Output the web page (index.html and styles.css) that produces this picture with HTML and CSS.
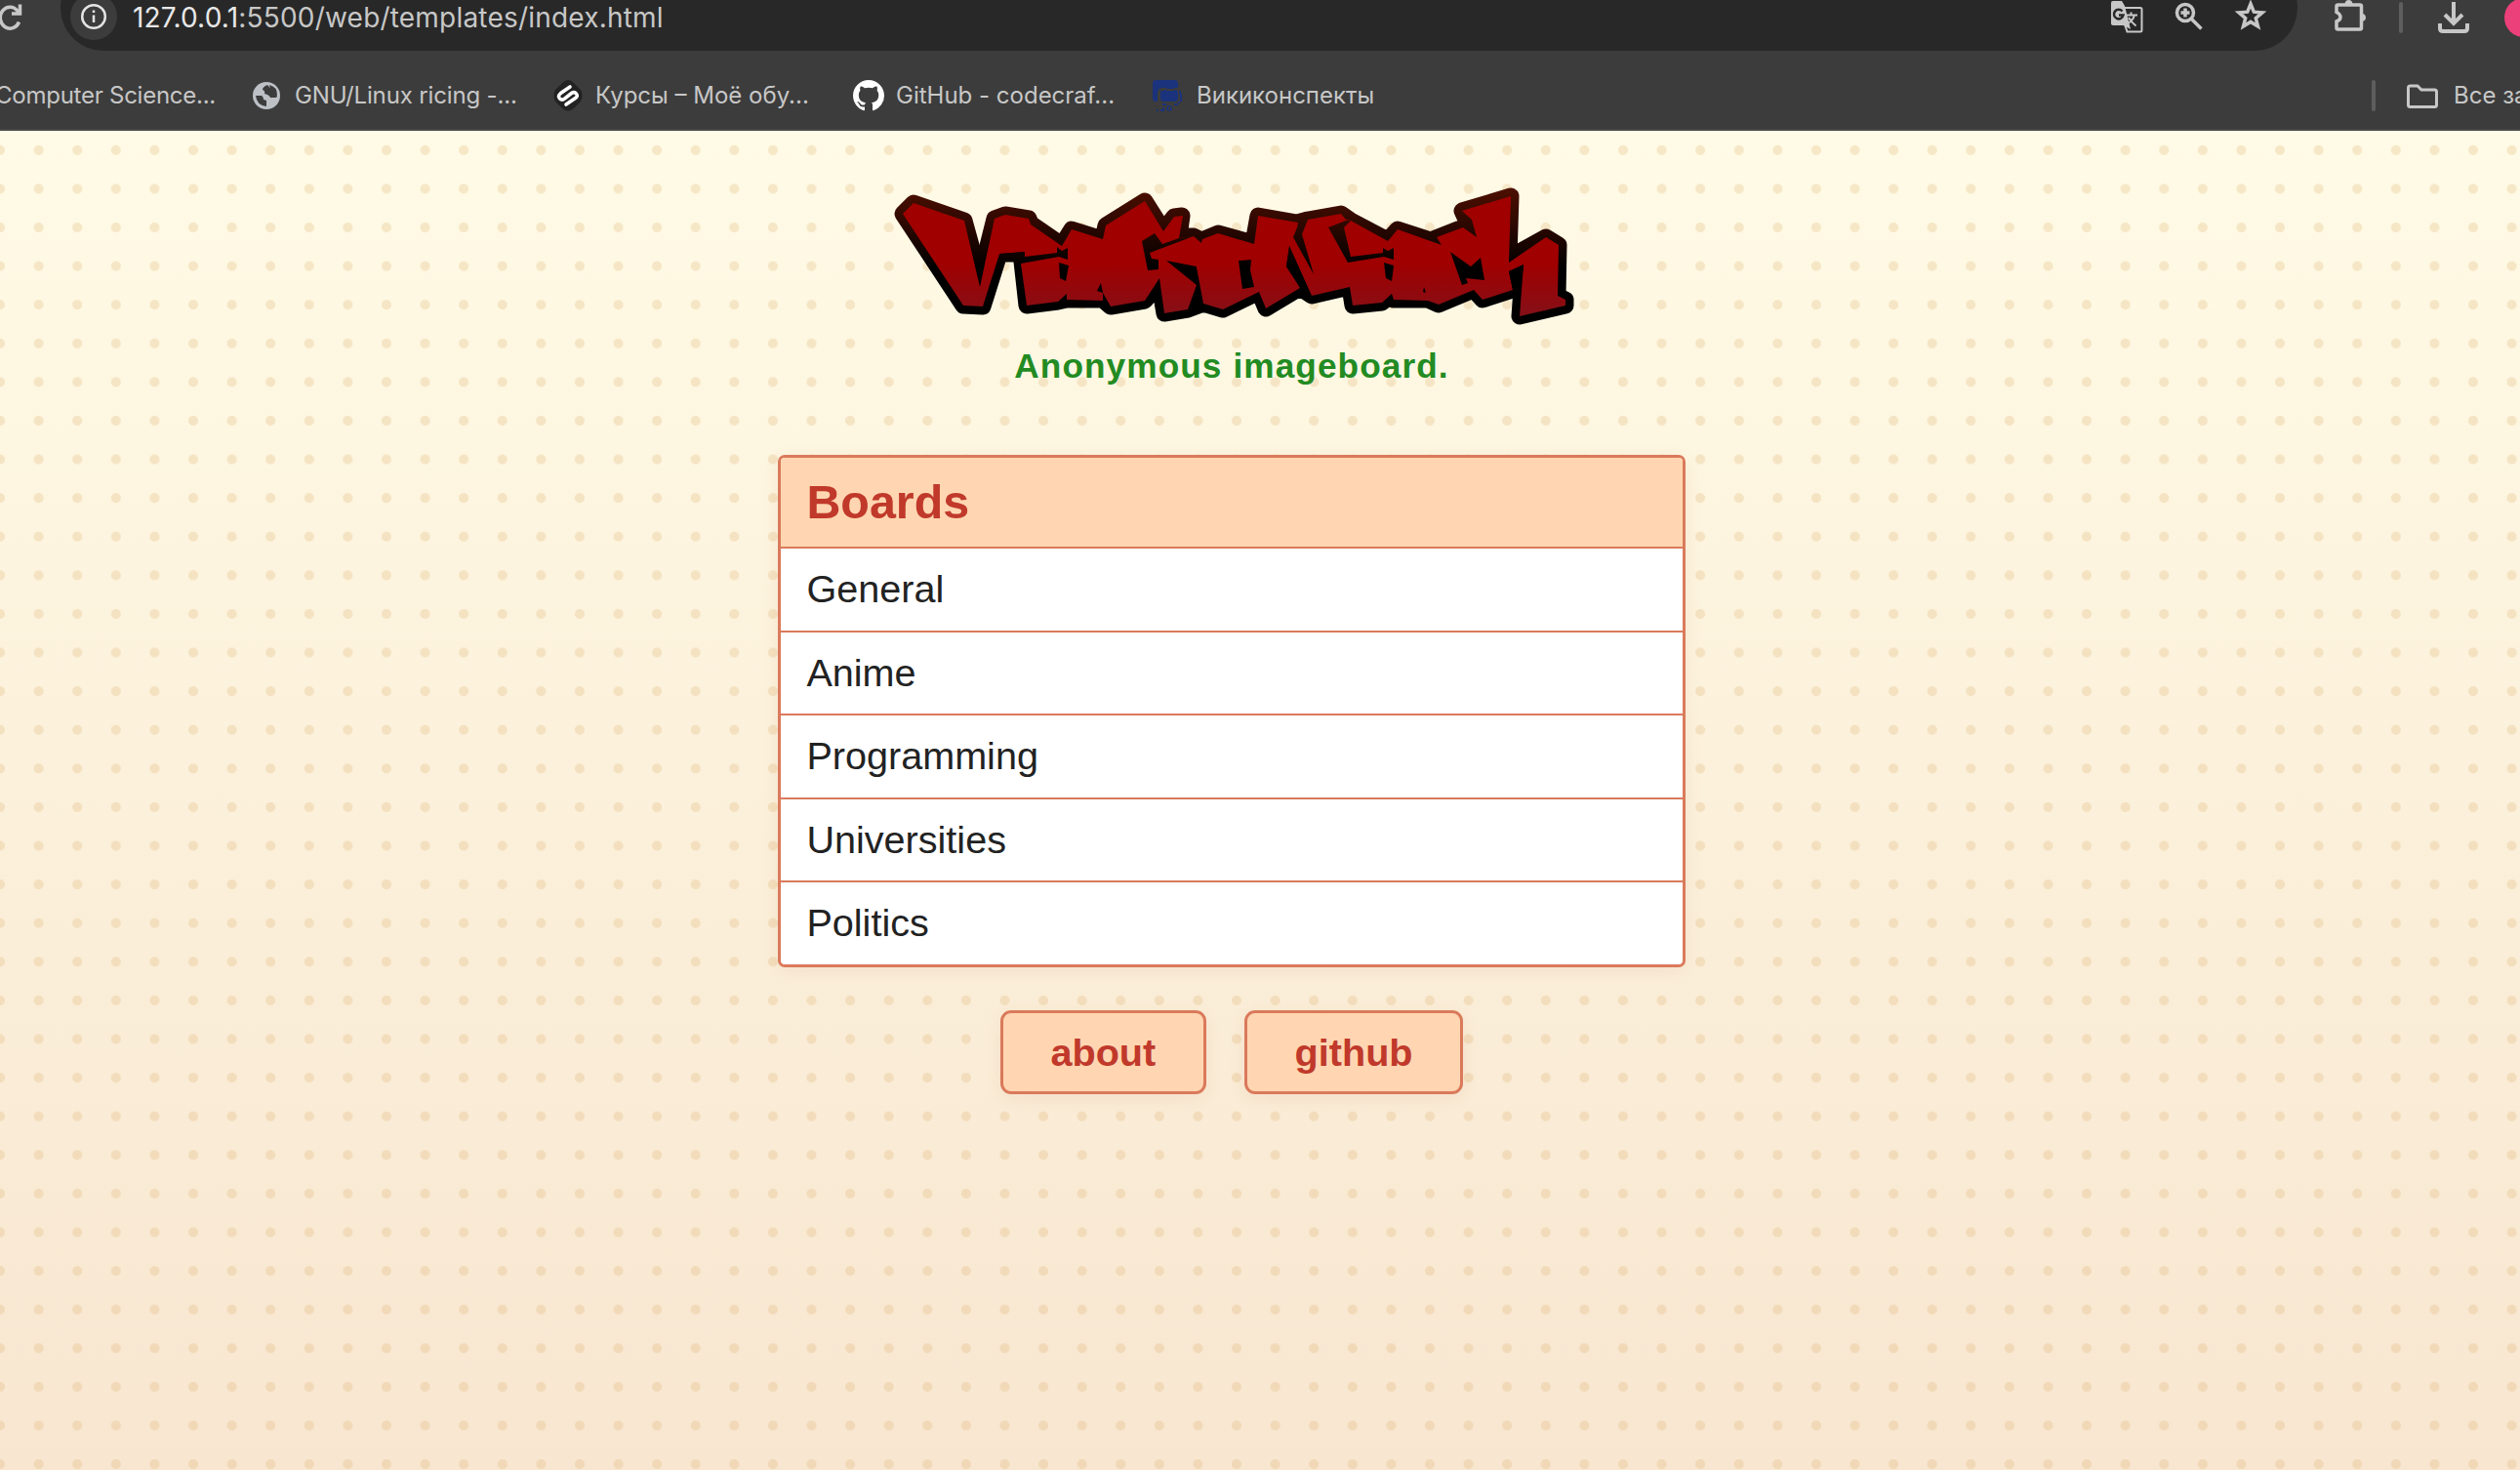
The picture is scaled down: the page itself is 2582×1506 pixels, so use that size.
FILE: index.html
```html
<!DOCTYPE html>
<html lang="ru">
<head>
<meta charset="utf-8">
<title>Anonymous imageboard</title>
<link rel="stylesheet" href="styles.css">
</head>
<body>
<header class="chrome">
  <div class="toolbar">
    <svg class="reload" viewBox="0 0 32 32"><path d="M25.500 20.500A10 11 0 1 1 24 9.200L26 11M26.500 2.500V12H18"/></svg>
    <div class="omnibox">
      <span class="info"><svg viewBox="0 0 28 28"><circle cx="14" cy="14" r="11.800"/><path d="M14 12.500V20M14 7.500V10"/></svg></span>
      <span class="url"><b>127.0.0.1</b>:5500/web/templates/index.html</span>
      <div class="omni-icons">
        <svg class="translate" viewBox="0 0 34 34"><path class="solid" d="M3 1H12L15 6L21 30L14 26H3Q1 26 1 24V3Q1 1 3 1Z"/><path class="frame" d="M15 8H31Q32.500 8 32.500 9.500V31Q32.500 32.500 31 32.500H17.500L14 22"/><path class="g" d="M12.500 11.500A4.800 4.800 0 1 0 13.500 15.500H9"/><path class="frame" d="M16 15.500H28M21.500 12.500V15.500M25 15.500Q23.500 21 17.500 24.500M19 18Q22 23 26.500 26.500"/></svg>
        <svg class="lens" viewBox="0 0 30 30"><circle cx="11" cy="11" r="8.500"/><path d="M17 17L27.500 27.500M11 6.500V15.500M6.500 11H15.500"/></svg>
        <svg class="star" viewBox="0 0 32 32"><path d="M16 4L19.300 12.200L28 12.900L21.300 18.600L23.500 27L16 22.400L8.500 27L10.700 18.600L4 12.900L12.700 12.200Z"/></svg>
      </div>
    </div>
    <svg class="puzzle" viewBox="0 0 34 34"><path d="M4.500 7H27Q28.500 7 28.500 8.500V30.500Q28.500 32 27 32H4.500Q3 32 3 30.500V24Q7 22.500 7 19.500T3 14.500V8.500Q3 7 4.500 7Z"/><path class="solid" d="M11.500 6Q12 2 15.500 2T19.500 6ZM29 15.500Q33 16.500 33 20T29 24Z"/></svg>
    <span class="bar"></span>
    <svg class="download" viewBox="0 0 32 32"><path d="M16 0V21M7 13L16 22L25 13M2 22V27Q2 30 5 30H27Q30 30 30 27V22"/></svg>
    <span class="avatar"></span>
  </div>
  <nav class="bookmarks">
    <span class="mark m1">Computer Science...</span>
    <span class="mark m2"><svg viewBox="0 0 28 28"><circle cx="14" cy="14" r="14" fill="#bdc1c6"/><path d="M15 3Q10 5 10 8Q13 9 12 12Q17 13 18 16H22Q25 16 25 14M3 14H9Q11 15 11 18L14 19V25Q4 24 3 14Z" fill="#3c3c3c"/><path d="M17 3Q25 5 25 13Q23 15 21 13Q19 12 16 12Q15 8 18 7Z" fill="#3c3c3c"/></svg>GNU/Linux ricing -...</span>
    <span class="mark m3"><svg viewBox="0 0 32 32"><path d="M16 0Q19 0 22 3L29 10Q32 16 29 22L22 29Q16 34 10 29L3 22Q0 16 3 10L10 3Q13 0 16 0Z" fill="#222"/><path d="M18 7L8.500 13.500Q5 16.500 7.500 19T12.500 19L19.500 13.500Q22.500 11.500 24.500 14T23.500 18.500L14 25" fill="none" stroke="#fff" stroke-width="3.600" stroke-linecap="round"/></svg>Курсы – Моё обу...</span>
    <span class="mark m4"><svg viewBox="0 0 16 16"><path fill="#fff" d="M8 0C3.580 0 0 3.580 0 8c0 3.540 2.290 6.530 5.470 7.590.4.070.55-.17.55-.38 0-.19-.01-.82-.01-1.490-2.010.37-2.530-.49-2.690-.94-.09-.23-.48-.94-.82-1.130-.28-.15-.68-.52-.01-.53.63-.01 1.080.58 1.230.82.72 1.210 1.870.87 2.330.66.07-.52.28-.87.51-1.070-1.780-.2-3.640-.89-3.640-3.950 0-.87.31-1.590.82-2.150-.08-.2-.36-1.020.08-2.120 0 0 .67-.21 2.200.82a7.600 7.600 0 0 1 4 0c1.530-1.040 2.200-.82 2.200-.82.44 1.100.16 1.920.08 2.120.51.56.82 1.270.82 2.150 0 3.070-1.870 3.750-3.650 3.950.29.25.54.73.54 1.480 0 1.070-.01 1.930-.01 2.200 0 .21.15.46.55.38A8 8 0 0 0 16 8c0-4.420-3.580-8-8-8Z"/></svg>GitHub - codecraf...</span>
    <span class="mark m5"><svg viewBox="0 0 32 32"><path fill="#1a337c" d="M2 0H24L26 2V8H22V9H14V8H8V9H6V12H5V22H2L0 20V2ZM8 11H12V10H14V11H22V10H25V12H26V20L24 22H10L8 20ZM27 11H29V14H27ZM28 14H30V22H28ZM26 22H28V24H26ZM22 24H26V26H22ZM10 24H14V26H10ZM15 26H19V27.500H15ZM14 28H16V31H14ZM18 28H20V31H18ZM16 30.500H18V32H16ZM4 30H6V32H4ZM8 30H10V28H12V32H8Z"/></svg>Викиконспекты</span>
    <span class="bar"></span>
    <span class="mark all"><svg viewBox="0 0 32 26"><path d="M3.500 3H11L15 7H28.500Q30.500 7 30.500 9V22.500Q30.500 24.500 28.500 24.500H3.500Q1.500 24.500 1.500 22.500V5Q1.500 3 3.500 3Z" fill="none" stroke="#c7c7c7" stroke-width="3"/></svg>Все закладки</span>
  </nav>
</header>
<main class="page">
  <svg class="logo" viewBox="-4 0 700 150" role="img" aria-label="logo">
    <defs>
      <linearGradient id="edge" gradientUnits="userSpaceOnUse" x1="0" y1="10" x2="0" y2="110"><stop offset="0" stop-color="#501000"/><stop offset=".4" stop-color="#2c0800"/><stop offset=".85" stop-color="#000"/></linearGradient>
      <linearGradient id="red" gradientUnits="userSpaceOnUse" x1="0" y1="90" x2="0" y2="145"><stop offset="0" stop-color="#a00000"/><stop offset="1" stop-color="#841018"/></linearGradient>
    </defs>
    <path class="outline" d="M9 39L20 28L72 46L88 104L103 44L114 40L138 44L140 49L172 71L182 55L214 65L217 51L257 26L276 56L287 42L295 41L292 62L307 62L315 66L332 59L368 69L373 41L413 48L424 45L458 39L468 46L506 66L516 55L550 66L583 53L587 47L582 36L632 21L630 84L668 63L681 71L680 123L688 127L688 133L641 144L643 115L634 117L603 127L594 117L558 132L547 127L512 127L510 121L500 130L470 133L467 114L428 123L416 115L381 136L374 119L337 137L317 131L301 137L277 141L272 111L257 128L222 134L214 127L177 127L168 129L136 133L131 88L129 80L108 80L91 134L71 133Z"/>
    <path class="fill" d="M9 39L20 28L72 46L88 114L103 44L114 40L138 44L140 50L172 72L182 55L214 65L217 51L257 26L276 57L287 42L296 41L292 64L307 62L315 69L316 65L332 59L369 70L373 41L414 48L413 53L409 63L430 101L418 60L424 45L458 39L463 45L468 46L506 67L516 55L561 71L556 63L583 53L597 63L592 45L582 36L632 21L630 89L668 63L681 71L680 123L688 127V133L641 144L645 91L630 98L634 117L603 127L594 117L558 132L547 128L512 127L510 121L500 130L470 133L467 114L428 123L405 72L402 93L416 115L381 136L374 119L337 137L317 131L310 94V112L301 137L277 141L272 105L257 128L222 134L214 120V128L177 127V121L168 129L136 133L130 90L134 78L108 80L91 134L71 133Z"/>
    <path class="shade" d="M108 80L134 78V83L167 79V73L172 77L178 74V86L169 83L130 90L120 84ZM169 89L179 92L176 108L170 105ZM208 118L212 110L214 120ZM254 67L267 59L275 70L292 64L307 62L262 79L264 85L271 86V96L260 97ZM279 87L310 93V112ZM353 87L366 86L365 97L369 114L357 116ZM405 72L402 93L416 114L426 120ZM445 53L463 46L468 46L461 53L468 83L501 79V74L506 77L512 74V86L502 83L465 89ZM502 89L512 92L510 108L504 105ZM542 119L543 114L545 120ZM570 78L591 93L601 84L605 107L586 105L588 110L582 112ZM630 98L645 91L641 130L634 117Z"/>
  </svg>
  <p class="tagline">Anonymous imageboard.</p>
  <section class="boards">
    <h2>Boards</h2>
    <a>General</a><a>Anime</a><a>Programming</a><a>Universities</a><a>Politics</a>
  </section>
  <div class="links"><a>about</a><a>github</a></div>
</main>
</body>
</html>
```
FILE: styles.css
```css
* { box-sizing: border-box; }
body { margin: 0; width: 2582px; height: 1506px; overflow: hidden; display: flex; flex-direction: column; font-family: "Liberation Sans", Arial, sans-serif; }
svg { display: block; flex: none; overflow: visible; }
.chrome { height: 134px; flex: none; background: #3c3c3c; border-bottom: 2px solid #474747; color: #c7c7c7; font-family: Inter, sans-serif; overflow: hidden; }
.toolbar { height: 52px; display: flex; align-items: flex-start; }
.toolbar > * { flex: none; }
.toolbar svg { fill: none; stroke: #c7c7c7; stroke-width: 3.5; }
.toolbar .solid { fill: #c7c7c7; stroke: none; }
.reload { width: 32px; height: 32px; margin: 2px 0 0 -6px; }
.omnibox { width: 2292px; height: 88px; margin: -36px 0 0 36px; padding: 29px 0 0 10px; border-radius: 44px; background: #282828; display: flex; align-items: flex-start; }
.info { width: 48px; height: 48px; border-radius: 50%; background: #3c3c3c; display: grid; place-items: center; }
.toolbar .info svg { width: 28px; height: 28px; stroke-width: 2.5; stroke: #e3e3e3; }
.url { margin: 8px 0 0 16px; font-size: 28px; line-height: 34px; letter-spacing: .2px; }
.url b { font-weight: 400; color: #e8e8e8; }
.omni-icons { display: flex; margin: 36px 32px 0 auto; margin-top: 7px; gap: 32px; }
.translate { width: 34px; height: 34px; }
.translate .frame { stroke-width: 2; }
.translate .g { stroke: #282828; stroke-width: 2.500; }
.lens { width: 30px; height: 30px; margin-top: 2px; }
.star { width: 32px; height: 32px; }
.puzzle { width: 34px; height: 34px; margin: -2px 0 0 37px; }
.bar { width: 4px; height: 32px; border-radius: 2px; background: #5e5e5e; margin: 2px 0 0 33px; }
.download { width: 32px; height: 32px; margin: 2px 0 0 36px; }
.toolbar .download { stroke-width: 4; }
.avatar { width: 40px; height: 40px; margin: -2px 0 0 36px; border-radius: 50%; background: #ec407a; }
.bookmarks { height: 80px; padding-top: 10px; display: flex; align-items: flex-start; font-size: 24px; line-height: 32px; }
.bookmarks .bar { margin: 20px 0 0 auto; flex: none; }
.mark { display: flex; align-items: center; height: 32px; margin-top: 20px; flex: none; white-space: nowrap; }
.m1 { margin-left: -5px; width: 264px; letter-spacing: -.25px; }
.m2 { width: 307px; gap: 15px; letter-spacing: -.15px; }
.m3 { width: 308px; gap: 12px; }
.m4 { width: 308px; gap: 12px; }
.m5 { margin-left: -1px; gap: 13px; }
.m2 svg { width: 28px; height: 28px; }
.m3 svg, .m4 svg, .m5 svg { width: 32px; height: 32px; }
.all { width: 116px; margin-left: 32px; gap: 16px; }
.all svg { width: 32px; height: 26px; }
.page { flex: 1; position: relative; display: flex; flex-direction: column; align-items: center; padding-right: 58px; background: radial-gradient(circle at 19.800px 19.800px, rgba(218,170,100,.24) 4.600px, transparent 5.400px) -19.800px 0 / 39.600px 39.600px, linear-gradient(#fffbe6, #f8e6d0); }
.logo { width: 700px; height: 150px; margin-top: 46px; }
.outline { fill: url(#edge); stroke: url(#edge); stroke-width: 17; stroke-linejoin: round; }
.fill { fill: url(#red); }
.shade { fill: url(#edge); }
.tagline { margin: 22px 0 0; font-size: 35.200px; line-height: 46px; font-weight: 700; color: #228b22; letter-spacing: 1.100px; }
.boards { width: 930px; margin-top: 68px; background: #fff; border: 3px solid #da7a5b; border-radius: 7px; overflow: hidden; box-shadow: 0 4px 18px rgba(180,100,60,.09); }
.boards h2 { height: 93px; margin: 0; padding: 0 26.400px; border-bottom: 2px solid #da7a5b; background: #ffd6b1; color: #c0392b; font-size: 48.400px; line-height: 91px; }
.boards a { display: block; height: 85.600px; padding: 0 26.400px; border-bottom: 2px solid #da7a5b; color: #222; font-size: 39.600px; line-height: 83px; }
.boards a:last-child { height: 83.600px; border: 0; }
.links { display: flex; gap: 39.600px; margin-top: 44px; }
.links a { height: 86px; padding: 0 48.400px; border: 3px solid #da7a5b; border-radius: 11px; background: #ffd6b1; color: #c0392b; font-size: 39.600px; line-height: 80px; font-weight: 700; box-shadow: 0 4px 18px rgba(180,100,60,.09); }
```
